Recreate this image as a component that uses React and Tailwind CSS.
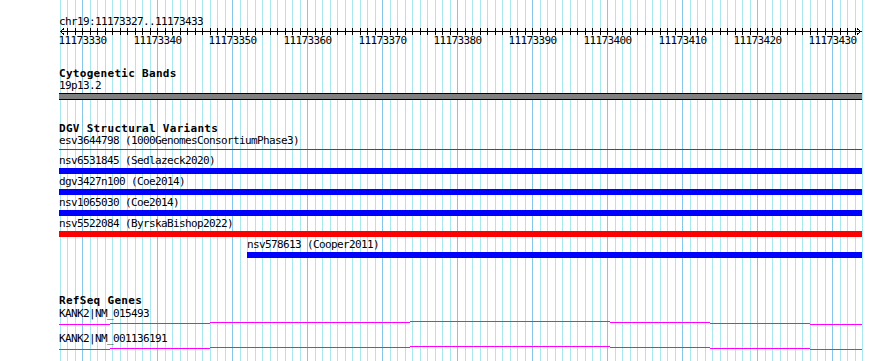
import React from "react";

const START = 11173327;
const END = 11173433;
const BP = 7.5; // px per base
const X0 = 60;

const xAt = (pos) => Math.floor(X0 + (pos - START) * BP);

const gridLines = Array.from({ length: END - START + 2 }, (_, i) => ({
  x: xAt(START + i) + 0.5,
  major: (START + i) % 10 === 0,
}));

const variants = [
  { name: "nsv6531845", study: "Sedlazeck2020", color: "bg-[#0000ff]", from: 59 },
  { name: "dgv3427n100", study: "Coe2014", color: "bg-[#0000ff]", from: 59 },
  { name: "nsv1065030", study: "Coe2014", color: "bg-[#0000ff]", from: 59 },
  { name: "nsv5522084", study: "ByrskaBishop2022", color: "bg-[#ff0000]", from: 59 },
];

// intron line drawn as aliased steps
const geneSteps = [
  [59, 110, 4.5],
  [110, 210, 3.5],
  [210, 410, 2.5],
  [410, 610, 1.5],
  [610, 710, 2.5],
  [710, 810, 3.5],
  [810, 862, 4.5],
];

function Grid() {
  return (
    <svg className="absolute inset-0" width="890" height="361" shapeRendering="crispEdges">
      {gridLines.map((l) => (
        <line
          key={l.x}
          x1={l.x}
          x2={l.x}
          y1="0"
          y2="361"
          stroke={l.major ? "#86c6e8" : "#a8e8ee"}
          strokeWidth="1"
        />
      ))}
    </svg>
  );
}

function Ruler() {
  const labels = gridLines.filter((l) => l.major);
  return (
    <svg width="890" height="18" className="block" shapeRendering="crispEdges">
      <line x1="60" x2="862" y1="3.5" y2="3.5" stroke="#000" />
      {gridLines.slice(1, -1).map((l) => (
        <line key={l.x} x1={l.x} x2={l.x} y1="0" y2="7" stroke="#000" />
      ))}
      <polyline points="64,0.5 60.5,3.5 64,6.5" fill="none" stroke="#000" />
      <polyline points="857,0.5 860.5,3.5 857,6.5" fill="none" stroke="#000" />
      {labels.map((l, i) => (
        <text
          key={l.x}
          x={l.x}
          y="16"
          textAnchor="middle"
          fontSize="11"
          letterSpacing="-0.62"
          fill="#000"
          style={{ fontFamily: "'DejaVu Sans Mono', monospace" }}
        >
          {START + 3 + i * 10}
        </text>
      ))}
    </svg>
  );
}

function GeneLine() {
  return (
    <svg width="890" height="7" className="block" shapeRendering="crispEdges">
      {geneSteps.map(([a, b, y]) => (
        <line key={a} x1={a} x2={b} y1={y} y2={y} stroke="#ff00ff" strokeWidth="1" />
      ))}
    </svg>
  );
}

const Label = ({ children, className = "" }) => (
  <div className={`h-[13px] leading-[13px] text-[11px] tracking-[-0.62px] whitespace-pre ${className}`}>
    {children}
  </div>
);

const Heading = ({ children, className = "" }) => (
  <div className={`h-[11px] leading-[11px] pl-[59px] text-[11px] font-bold tracking-[0.3px] whitespace-pre ${className}`}>
    {children}
  </div>
);

export default function App() {
  return (
    <div className="relative w-[890px] h-[361px] overflow-hidden bg-white text-black font-['DejaVu_Sans_Mono',monospace]">
      <Grid />
      <div className="relative flex flex-col">
        <Label className="mt-[15px] pl-[59px]">chr19:11173327..11173433</Label>
        <Ruler />

        <Heading className="mt-[22px]">Cytogenetic Bands</Heading>
        <Label className="pl-[59px]">19p13.2</Label>
        <div className="mt-[1px] ml-[59px] w-[803px] h-[7px] border-y border-black bg-[#808080]" />

        <Heading className="mt-[23px]">DGV Structural Variants</Heading>
        <Label className="pl-[59px]">esv3644798 (1000GenomesConsortiumPhase3)</Label>
        <div className="mt-[2px] ml-[59px] w-[803px] h-[1px] bg-[#ff0000]" />

        <div className="mt-[4px] flex flex-col">
          {variants.map((v) => (
            <div key={v.name} className="flex flex-col pb-[1px]">
              <Label className="pl-[59px]">{`${v.name} (${v.study})`}</Label>
              <div className={`mt-[1px] ml-[59px] w-[803px] h-[6px] ${v.color}`} />
            </div>
          ))}
          <div className="flex flex-col pb-[1px]">
            <Label className="pl-[247px]">nsv578613 (Cooper2011)</Label>
            <div className="mt-[1px] ml-[247px] w-[615px] h-[6px] bg-[#0000ff]" />
          </div>
        </div>

        <Heading className="mt-[36px]">RefSeq Genes</Heading>
        <Label className="mt-[1px] pl-[59px]">KANK2|NM_015493</Label>
        <GeneLine />
        <Label className="mt-[5px] pl-[59px]">KANK2|NM_001136191</Label>
        <GeneLine />
      </div>
    </div>
  );
}
